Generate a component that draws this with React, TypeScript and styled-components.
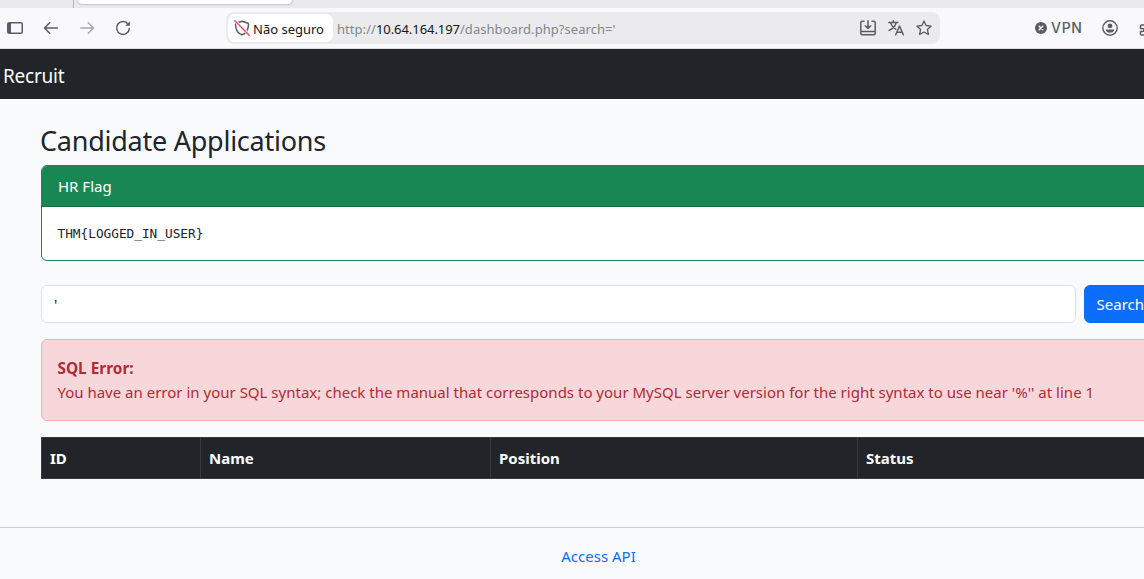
import React from "react";
import styled, { createGlobalStyle } from "styled-components";

const GlobalStyle = createGlobalStyle`
  *, *::before, *::after { box-sizing: border-box; }
  html, body { margin: 0; padding: 0; overflow: hidden; }
  body {
    background: #f8fafc;
    color: #212529;
    font: 400 15px/24px "Noto Sans", "Open Sans", sans-serif;
  }
`;

const Window = styled.div`
  width: 100vw;
  height: 579px;
  overflow: hidden;
  display: flex;
  flex-direction: column;
`;

/* Browser chrome */

const TabStrip = styled.div`
  flex: none;
  display: flex;
  height: 8px;
  background: #eaeaec;
`;

const PinnedArea = styled.div`
  width: 74px;
  border-right: 1px solid #b4b4bb;
`;

const ActiveTab = styled.div`
  width: 214px;
  height: 4px;
  margin-left: 4px;
  background: #fff;
  border-radius: 0 0 5px 5px;
  box-shadow: 0 0 2px rgba(0, 0, 0, 0.5);
`;

const Toolbar = styled.div`
  flex: none;
  display: flex;
  align-items: center;
  width: 1160px;
  height: 41px;
  padding-left: 7px;
  background: #f9f9fc;
  border-bottom: 1px solid #dcdde0;
  color: #5b5b66;
`;

const NavIcons = styled.div`
  display: flex;
  gap: 20px;
  width: 219px;

  svg { display: block; }
`;

const AddressBar = styled.div`
  display: flex;
  align-items: center;
  width: 714px;
  height: 32px;
  padding: 2px 8px 2px 2px;
  border-radius: 8px;
  background: #ebebed;
  font-size: 13px;
  line-height: 28px;
  white-space: pre;
`;

const Identity = styled.div`
  display: flex;
  align-items: center;
  gap: 3px;
  width: 105px;
  height: 28px;
  padding-left: 6px;
  border-radius: 7px;
  background: #fff;
  color: #5b5b66;
`;

const Url = styled.div`
  flex: 1;
  margin-left: 4px;
  padding-top: 1px;
  color: #86868b;
  letter-spacing: 0.05px;
`;

const Host = styled.span`
  color: #15141a;
  letter-spacing: -0.06px;
`;

const Label = styled.span`
  padding-top: 1px;
  color: #15141a;
`;

const PageActions = styled.div`
  display: flex;
  gap: 12px;
`;

const Vpn = styled.div`
  display: flex;
  align-items: center;
  gap: 4px;
  margin-left: 95px;
  width: 67px;
  font: 500 14px/16px Inter, sans-serif;
  letter-spacing: 0.7px;
`;

const AccountTools = styled.div`
  display: flex;
  gap: 21px;
`;

/* Web page */

const Page = styled.div`
  flex: none;
  width: 1197px;
  background: #f8fafc;
`;

const Navbar = styled.nav`
  height: 50px;
  padding: 11px 3px 9px;
  background: #212529;
  color: #fff;
  font-size: 19px;
  line-height: 33px;
  letter-spacing: -0.25px;
`;

const Container = styled.main`
  width: 1116px;
  margin: 25px 0 0 41px;
`;

const Heading = styled.h2`
  margin: 0 0 7px -1px;
  font-size: 27px;
  font-weight: 400;
  line-height: 34px;
  letter-spacing: -0.25px;
`;

const Card = styled.section`
  height: 96px;
  border: 1px solid #198754;
  border-radius: 6px;
  overflow: hidden;
  background: #fff;
`;

const CardHeader = styled.div`
  height: 41px;
  padding: 8px 16px;
  background: #198754;
  border-bottom: 1px solid #146c43;
  color: #fff;
`;

const Flag = styled.pre`
  margin: 0;
  padding: 16px 15.5px;
  font: 12.75px/21px "DejaVu Sans Mono", monospace;
`;

const SearchForm = styled.form`
  display: flex;
  gap: 8px;
  margin: 24px 0 16px;
`;

const SearchInput = styled.input`
  width: 1035px;
  height: 38px;
  padding: 6px 12px;
  border: 1px solid #dee2e6;
  border-radius: 6px;
  background: #fff;
  color: #212529;
  font: inherit;
  outline: none;
`;

const SearchButton = styled.button`
  height: 38px;
  padding: 6px 12px;
  border: 1px solid #0d6efd;
  border-radius: 6px;
  background: #0d6efd;
  color: #fff;
  font: inherit;
`;

const Alert = styled.div`
  height: 82px;
  margin-bottom: 16px;
  padding: 17px 15.4px 15px;
  border: 1px solid #f1aeb5;
  border-radius: 6px;
  background: #f8d7da;
  color: #b02a37;
  white-space: nowrap;
  letter-spacing: 0.006px;
`;

const AlertTitle = styled.strong`
  display: block;
  font-size: 15.4px;
  line-height: 23px;
`;

const TableHead = styled.div`
  display: grid;
  grid-template-columns: 159px 290px 367px 1fr;
  height: 42px;
  border: 1px solid #373b3e;
  background: #212529;
  color: #fff;
  font-weight: 700;
`;

const HeadCell = styled.div`
  padding: 8px;

  & + & { border-left: 1px solid #373b3e; margin-left: -1px; }
`;

const Footer = styled.footer`
  margin-top: 48px;
  padding: 16px 0 20px;
  border-top: 1px solid #cfd0d3;
  text-align: center;
`;

const Link = styled.a`
  color: #0d6efd;
  text-decoration: none;
`;

const Icon = ({ children, width = 16 }: { children: React.ReactNode; width?: number }) => (
  <svg
    width={width}
    height="16"
    viewBox={`0 0 ${width} 16`}
    fill="none"
    stroke="currentColor"
    strokeWidth="1.5"
    strokeLinecap="round"
    strokeLinejoin="round"
  >
    {children}
  </svg>
);

const columns = ["ID", "Name", "Position", "Status"];

export default function App() {
  return (
    <Window>
      <GlobalStyle />
      <TabStrip>
        <PinnedArea />
        <ActiveTab />
      </TabStrip>
      <Toolbar>
        <NavIcons>
          <Icon>
            <rect x="0.75" y="2.75" width="14.5" height="10.5" rx="1.5" />
            <path d="M1 3h3v10H1z" fill="currentColor" stroke="none" />
            <path d="M3.5 3v10" strokeWidth="1" />
          </Icon>
          <Icon>
            <path d="M1.7 8h12.6M6.7 2.8 1.5 8l5.2 5.2" />
          </Icon>
          <Icon>
            <path d="M1.7 8h12.6M9.3 2.8 14.5 8l-5.2 5.2" opacity="0.5" />
          </Icon>
          <Icon>
            <path d="M13.2 4.2A6.4 6.4 0 1 0 14.4 8.6" />
            <path d="M14.9 1.2v4.6h-4.6z" fill="currentColor" stroke="none" />
          </Icon>
        </NavIcons>
        <AddressBar>
          <Identity>
            <Icon>
              <path d="M8 1.2 13.5 3c.7.3 1 .7 1 1.4-.1 5.2-1.9 8.7-6.5 10.4C3.4 13.1 1.6 9.6 1.500 4.400c0-.7.3-1.100 1-1.400z" />
              <path d="M1 .8 15.200 15" stroke="#fff" strokeWidth="3" />
              <path d="M.8.8 15.200 15.200" stroke="#ff4067" strokeWidth="1.400" />
            </Icon>
            <Label>Não seguro</Label>
          </Identity>
          <Url>
            http://<Host>10.64.164.197</Host>/dashboard.php?search='
          </Url>
          <PageActions>
            <Icon>
              <path d="M4.500 1.200H2.200c-.8 0-1.400.6-1.400 1.400v10.800c0 .8.6 1.400 1.400 1.400h11.600c.8 0 1.400-.6 1.400-1.400V2.600c0-.8-.6-1.400-1.400-1.400h-2.300M.8 11.500h14.400" strokeLinecap="butt" />
              <path d="M8 .8v7.400M5.300 5.700 8 8.400l2.700-2.700" />
            </Icon>
            <Icon>
              <path d="M.8 2.500h9M5.300.8v1.700M8.200 2.700C7.300 6 5 8.700 1 10.300M2.700 3.200c1 2.700 2.800 4.800 5 6" strokeWidth="1.400" />
              <path d="M7.700 14.800 11.500 6l3.800 8.800M9 12.200h5" strokeWidth="1.500" />
            </Icon>
            <Icon>
              <path d="m8 .9 2.100 4.600 5 .6-3.700 3.400 1 5L8 12l-4.400 2.500 1-5L.9 6.100l5-.6z" strokeWidth="1.300" />
            </Icon>
          </PageActions>
        </AddressBar>
        <Vpn>
          <Icon width={12}>
            <circle cx="6" cy="8" r="6" fill="currentColor" stroke="none" />
            <path d="m4.200 6.200 3.600 3.600m0-3.600L4.200 9.800" stroke="#f9f9fc" />
          </Icon>
          VPN
        </Vpn>
        <AccountTools>
          <Icon>
            <circle cx="8" cy="8" r="7.200" strokeWidth="1.400" />
            <circle cx="8" cy="5.900" r="2.400" fill="currentColor" stroke="none" />
            <path d="M3.800 9.500h8.400c0 2-1.900 3.300-4.200 3.300s-4.200-1.300-4.200-3.300z" fill="currentColor" stroke="none" />
          </Icon>
          <Icon>
            <path d="M6 5H2.500c-.6 0-1 .4-1 1v2.500h2a1.300 1.300 0 0 1 0 3h-2V14c0 .6.4 1 1 1H12V5H9" />
          </Icon>
        </AccountTools>
      </Toolbar>
      <Page>
        <Navbar>Recruit</Navbar>
        <Container>
          <Heading>Candidate Applications</Heading>
          <Card>
            <CardHeader>HR Flag</CardHeader>
            <Flag>{"THM{LOGGED_IN_USER}"}</Flag>
          </Card>
          <SearchForm>
            <SearchInput defaultValue="'" />
            <SearchButton type="button">Search</SearchButton>
          </SearchForm>
          <Alert>
            <AlertTitle>SQL Error:</AlertTitle>
            You have an error in your SQL syntax; check the manual that corresponds to your MySQL
            server version for the right syntax to use near '%'' at line 1
          </Alert>
          <TableHead>
            {columns.map((name) => (
              <HeadCell key={name}>{name}</HeadCell>
            ))}
          </TableHead>
        </Container>
        <Footer>
          <Link>Access API</Link>
        </Footer>
      </Page>
    </Window>
  );
}
